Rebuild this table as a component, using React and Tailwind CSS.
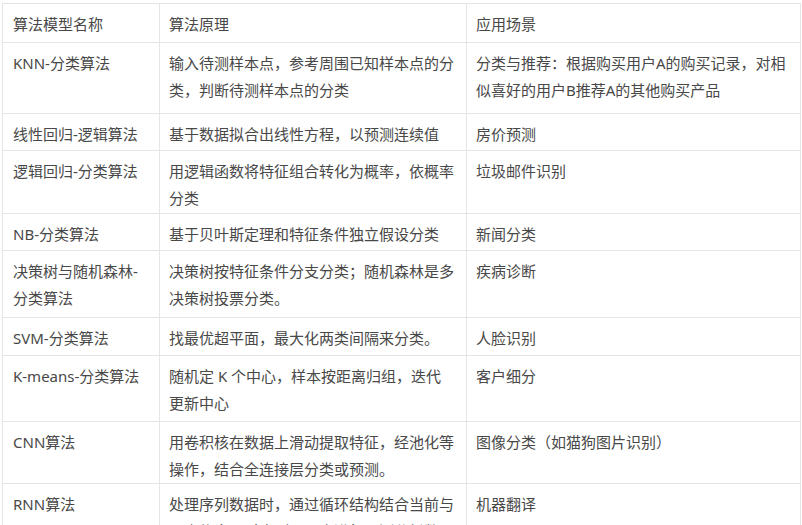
import React from "react";

const rows = [
  { h: "h-[39px]", c: [["算法模型名称"], ["算法原理"], ["应用场景"]] },
  {
    h: "h-[71px]",
    c: [
      ["KNN-分类算法"],
      ["输入待测样本点，参考周围已知样本点的分", "类，判断待测样本点的分类"],
      ["分类与推荐：根据购买用户A的购买记录，对相", "似喜好的用户B推荐A的其他购买产品"],
    ],
  },
  { h: "h-[37px]", c: [["线性回归-逻辑算法"], ["基于数据拟合出线性方程，以预测连续值"], ["房价预测"]] },
  {
    h: "h-[63px]",
    c: [["逻辑回归-分类算法"], ["用逻辑函数将特征组合转化为概率，依概率", "分类"], ["垃圾邮件识别"]],
  },
  { h: "h-[37px]", c: [["NB-分类算法"], ["基于贝叶斯定理和特征条件独立假设分类"], ["新闻分类"]] },
  {
    h: "h-[67px]",
    c: [
      ["决策树与随机森林-", "分类算法"],
      ["决策树按特征条件分支分类；随机森林是多", "决策树投票分类。"],
      ["疾病诊断"],
    ],
  },
  { h: "h-[38px]", c: [["SVM-分类算法"], ["找最优超平面，最大化两类间隔来分类。"], ["人脸识别"]] },
  {
    h: "h-[66px]",
    c: [["K-means-分类算法"], ["随机定 K 个中心，样本按距离归组，迭代", "更新中心"], ["客户细分"]],
  },
  {
    h: "h-[62px]",
    c: [["CNN算法"], ["用卷积核在数据上滑动提取特征，经池化等", "操作，结合全连接层分类或预测。"], ["图像分类（如猫狗图片识别）"]],
  },
  {
    h: "h-[62px]",
    c: [["RNN算法"], ["处理序列数据时，通过循环结构结合当前与", "历史信息，对序列下一步进行预测分析数"], ["机器翻译"]],
  },
];

const widths = ["w-[157px] pl-[10px]", "w-[307px] pl-[9px]", "w-[334px] pl-[9px]"];

export default function App() {
  return (
    <div
      className="w-[802px] h-[525px] overflow-hidden bg-white text-[#484848]"
      style={{ fontFamily: '"Noto Sans", "Noto Sans CJK SC", sans-serif' }}
    >
      <div className="ml-[2px] mt-[3px] w-[799px] border-l border-t border-[#e5e5e5]">
        {rows.map((r, i) => (
          <div key={i} className={`flex border-b border-[#e5e5e5] ${r.h}`}>
            {r.c.map((lines, j) => (
              <div
                key={j}
                className={`${widths[j]} shrink-0 border-r border-[#e5e5e5] pt-[7px] text-[15px] leading-[27px] whitespace-nowrap overflow-hidden`}
              >
                {lines.map((l, k) => (
                  <div key={k}>{l}</div>
                ))}
              </div>
            ))}
          </div>
        ))}
      </div>
    </div>
  );
}
